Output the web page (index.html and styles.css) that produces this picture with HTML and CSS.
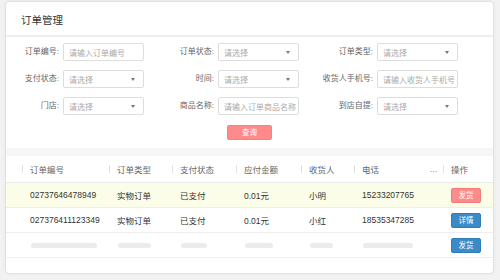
FILE: index.html
```html
<!DOCTYPE html>
<html lang="zh-CN">
<head>
<meta charset="utf-8">
<title>订单管理</title>
<link rel="stylesheet" href="styles.css">
</head>
<body>
<div class="card">
  <div class="card-title">订单管理</div>
  <div class="filters">
    <label class="lbl">订单编号:</label>
    <div class="field"><span class="ph">请输入订单编号</span></div>
    <label class="lbl">订单状态:</label>
    <div class="field select"><span class="ph">请选择</span><i class="caret"></i></div>
    <label class="lbl">订单类型:</label>
    <div class="field select"><span class="ph">请选择</span><i class="caret"></i></div>

    <label class="lbl">支付状态:</label>
    <div class="field select"><span class="ph">请选择</span><i class="caret"></i></div>
    <label class="lbl">时间:</label>
    <div class="field select"><span class="ph">请选择</span><i class="caret"></i></div>
    <label class="lbl">收货人手机号:</label>
    <div class="field"><span class="ph">请输入收货人手机号</span></div>

    <label class="lbl">门店:</label>
    <div class="field select"><span class="ph">请选择</span><i class="caret"></i></div>
    <label class="lbl">商品名称:</label>
    <div class="field"><span class="ph">请输入订单商品名称</span></div>
    <label class="lbl">到店自提:</label>
    <div class="field select"><span class="ph">请选择</span><i class="caret"></i></div>
  </div>
  <div class="actions"><button class="btn btn-query">查询</button></div>
  <div class="band"></div>
  <div class="table">
    <div class="tr thead">
      <div class="th first"></div>
      <div class="th">订单编号</div>
      <div class="th">订单类型</div>
      <div class="th">支付状态</div>
      <div class="th">应付金额</div>
      <div class="th">收货人</div>
      <div class="th">电话<span class="more">...</span></div>
      <div class="th">操作</div>
    </div>
    <div class="tr hl">
      <div class="td"></div>
      <div class="td">02737646478949</div>
      <div class="td">实物订单</div>
      <div class="td">已支付</div>
      <div class="td">0.01元</div>
      <div class="td">小明</div>
      <div class="td">15233207765</div>
      <div class="td"><button class="btn btn-pink">发货</button></div>
    </div>
    <div class="tr">
      <div class="td"></div>
      <div class="td">027376411123349</div>
      <div class="td">实物订单</div>
      <div class="td">已支付</div>
      <div class="td">0.01元</div>
      <div class="td">小红</div>
      <div class="td">18535347285</div>
      <div class="td"><button class="btn btn-blue">详情</button></div>
    </div>
    <div class="tr">
      <div class="td"></div>
      <div class="td"><span class="sk w66"></span></div>
      <div class="td"><span class="sk w33"></span></div>
      <div class="td"><span class="sk w26"></span></div>
      <div class="td"><span class="sk w28"></span></div>
      <div class="td"><span class="sk w23"></span></div>
      <div class="td"><span class="sk w50"></span></div>
      <div class="td"><button class="btn btn-blue">发货</button></div>
    </div>
  </div>
</div>
</body>
</html>
```
FILE: styles.css
```css
html, body {
  margin: 0;
  padding: 0;
}
body {
  background: #f2f2f3;
  font-family: "Liberation Sans", "Noto Sans CJK SC", sans-serif;
  width: 500px;
  height: 280px;
  overflow: hidden;
}
.card {
  box-sizing: border-box;
  width: 489px;
  height: 273px;
  margin: 1px 0 0 5px;
  background: #fff;
  border: 1px solid #e2e2e2;
  border-radius: 4px;
  box-shadow: 0 0 3px rgba(0, 0, 0, 0.06);
  overflow: hidden;
}
.card-title {
  padding: 11px 15px 7px;
  font-size: 10.5px;
  line-height: 15px;
  color: #333;
  border-bottom: 2px solid #eeeeee;
}
.filters {
  display: grid;
  grid-template-columns: 53px 81px 66px 81px 70px 81px;
  grid-auto-rows: 18px;
  column-gap: 4px;
  row-gap: 9px;
  padding-top: 6px;
}
.lbl {
  font-size: 8px;
  line-height: 18px;
  color: #666;
  text-align: right;
  white-space: nowrap;
}
.field {
  box-sizing: border-box;
  height: 18px;
  border: 1px solid #dddddd;
  border-radius: 2px;
  display: flex;
  align-items: center;
  justify-content: space-between;
  padding: 0 1px 0 5px;
  overflow: hidden;
}
.field.select {
  padding-right: 8px;
}
.ph {
  font-size: 8px;
  color: #aaaaaa;
  white-space: nowrap;
}
.caret {
  width: 0;
  height: 0;
  border-left: 2.5px solid transparent;
  border-right: 2.5px solid transparent;
  border-top: 3px solid #777;
}
.actions {
  display: flex;
  justify-content: center;
  padding: 10px 0 8px;
}
.btn {
  box-sizing: border-box;
  width: 30px;
  height: 15px;
  padding: 0;
  border-radius: 2px;
  font-family: "Liberation Sans", "Noto Sans CJK SC", sans-serif;
  font-size: 7.5px;
  line-height: 13px;
  color: #fff;
  cursor: pointer;
}
.btn-query {
  width: 45px;
  background: #ff8a8a;
  border: 1px solid #ff7f7f;
}
.btn-pink {
  background: #fd8b8b;
  border: 1px solid #f57a7a;
}
.btn-blue {
  background: #3b8bc6;
  border: 1px solid #2f7cb6;
}
.band {
  height: 8px;
  background: #f5f6f8;
}
.tr {
  display: grid;
  grid-template-columns: 16px 87px 63px 64px 65px 53px 89px 1fr;
  height: 25px;
  border-bottom: 1px solid #eeeeee;
  box-sizing: border-box;
}
.thead {
  height: 27px;
  border-bottom: 1.5px solid #e9e9e9;
}
.tr.hl {
  background: #fbfde9;
}
.th {
  display: flex;
  align-items: center;
  font-size: 8.5px;
  color: #666;
  white-space: nowrap;
}
.th::before {
  content: "";
  width: 1px;
  height: 8px;
  background: #e2e2e2;
  margin-right: 7px;
}
.th.first::before {
  display: none;
}
.more {
  margin-left: auto;
  margin-right: 6px;
  color: #888;
}
.td {
  display: flex;
  align-items: center;
  padding-left: 8px;
  font-size: 8.5px;
  color: #333;
  white-space: nowrap;
}
.sk {
  display: block;
  height: 5px;
  border-radius: 3px;
  background: #ececec;
  margin-left: 1px;
}
.w66 { width: 66px; }
.w33 { width: 33px; }
.w26 { width: 26px; }
.w28 { width: 28px; }
.w23 { width: 23px; }
.w50 { width: 50px; }
```
